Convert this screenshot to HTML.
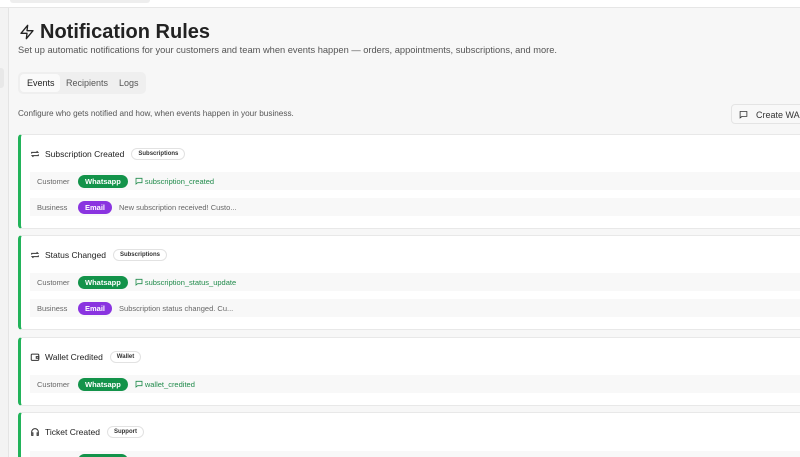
<!DOCTYPE html>
<html><head><style>
*{box-sizing:border-box;margin:0;padding:0}
html,body{width:800px;height:457px;overflow:hidden}
body{background:#f7f7f7;font-family:"Liberation Sans",sans-serif;position:relative;color:#222}
.top{position:absolute;left:0;top:0;width:800px;height:8px;background:#fff;border-bottom:1px solid #e6e6e6}
.topbar{position:absolute;left:10px;top:0;width:140px;height:3px;background:#eee;border-radius:0 0 4px 4px}
.side{position:absolute;left:0;top:8px;width:9px;height:449px;background:#f3f3f3;border-right:1px solid #e4e4e4}
.side i{position:absolute;left:0;top:60px;width:4px;height:20px;background:#e8e8e8;border-radius:0 3px 3px 0}
h1{position:absolute;left:40px;top:21px;font-size:20px;font-weight:bold;color:#222}
.bolt{position:absolute;left:19px;top:23px}
.sub{position:absolute;left:18px;top:45px;font-size:9.3px;color:#555}
.tabs{position:absolute;left:18px;top:72px;width:128px;height:22px;background:#efefef;border-radius:5px}
.tabs span{position:absolute;top:6px;font-size:9px;color:#555}
.tabs .on{left:2px;top:2px;width:40px;height:18px;background:#fafafa;border-radius:4px;color:#222;padding:4px 0 0 7px}
.desc{position:absolute;left:18px;top:109px;font-size:8.2px;color:#555}
.btn{position:absolute;left:731px;top:104px;width:80px;height:20px;border:1px solid #e4e4e4;border-radius:4px;background:#f8f8f8;font-size:9px;color:#333;padding:5px 0 0 24px}
.card{position:absolute;left:18px;width:800px;background:#fff;border:1px solid #e8e8e8;border-left:3px solid #22b35a;border-radius:4px;overflow:hidden}
.t{position:absolute;left:9px;font-size:8.5px;color:#222;display:flex;align-items:center;gap:5px}
.t svg{width:10px;height:10px}
.tag{font-size:6px;font-weight:bold;color:#333;border:1px solid #e2e2e2;border-radius:8px;padding:2px 6px;margin-left:2px}
.row{position:absolute;left:9px;width:780px;height:18px;background:#f8f8f8;font-size:7.5px;color:#666;display:flex;align-items:center}
.row .w{width:48px;padding-left:7px}
.pill{color:#fff;font-weight:bold;font-size:7.5px;border-radius:8px;padding:2px 7px;margin-right:7px}
.g{background:#13934a}.p{background:#8a34e0}
.lk{color:#1f8a4a;display:flex;align-items:center;gap:2px}
.lk svg{width:8px;height:8px}
</style></head><body>
<div class="top"><div class="topbar"></div></div>
<div class="side"><i></i></div>
<svg class="bolt" width="16" height="18" viewBox="0 0 24 24" fill="none" stroke="#222" stroke-width="2" stroke-linejoin="round"><path d="M13 2L3 14h9l-1 8 10-12h-9l1-8z"/></svg>
<h1>Notification Rules</h1>
<div class="sub">Set up automatic notifications for your customers and team when events happen — orders, appointments, subscriptions, and more.</div>
<div class="tabs"><span class="on">Events</span><span style="left:48px">Recipients</span><span style="left:101px">Logs</span></div>
<div class="desc">Configure who gets notified and how, when events happen in your business.</div>
<div class="btn"><svg style="position:absolute;left:7px;top:5px" width="9" height="9" viewBox="0 0 24 24" fill="none" stroke="#333" stroke-width="2.2"><path d="M3 4h18v13H8l-5 4z"/></svg>Create WA T</div>

<div class="card" style="top:134px;height:95px">
 <div class="t" style="top:13px"><svg viewBox="0 0 24 24" fill="none" stroke="#333" stroke-width="2.4"><path d="M4 11V8h15l-3-3M20 13v3H5l3 3"/></svg>Subscription Created<span class="tag">Subscriptions</span></div>
 <div class="row" style="top:37px"><span class="w">Customer</span><span class="pill g">Whatsapp</span><span class="lk"><svg viewBox="0 0 24 24" fill="none" stroke="#1f8a4a" stroke-width="2.4"><path d="M3 4h18v13H8l-5 4z"/></svg>subscription_created</span></div>
 <div class="row" style="top:63px"><span class="w">Business</span><span class="pill p">Email</span><span>New subscription received! Custo...</span></div>
</div>
<div class="card" style="top:235px;height:95px">
 <div class="t" style="top:13px"><svg viewBox="0 0 24 24" fill="none" stroke="#333" stroke-width="2.4"><path d="M4 11V8h15l-3-3M20 13v3H5l3 3"/></svg>Status Changed<span class="tag">Subscriptions</span></div>
 <div class="row" style="top:37px"><span class="w">Customer</span><span class="pill g">Whatsapp</span><span class="lk"><svg viewBox="0 0 24 24" fill="none" stroke="#1f8a4a" stroke-width="2.4"><path d="M3 4h18v13H8l-5 4z"/></svg>subscription_status_update</span></div>
 <div class="row" style="top:63px"><span class="w">Business</span><span class="pill p">Email</span><span>Subscription status changed. Cu...</span></div>
</div>
<div class="card" style="top:337px;height:69px">
 <div class="t" style="top:13px"><svg viewBox="0 0 24 24" fill="none" stroke="#333" stroke-width="2.4"><rect x="3" y="5" width="18" height="15" rx="2"/><path d="M15 11h6v4h-6z"/></svg>Wallet Credited<span class="tag">Wallet</span></div>
 <div class="row" style="top:37px"><span class="w">Customer</span><span class="pill g">Whatsapp</span><span class="lk"><svg viewBox="0 0 24 24" fill="none" stroke="#1f8a4a" stroke-width="2.4"><path d="M3 4h18v13H8l-5 4z"/></svg>wallet_credited</span></div>
</div>
<div class="card" style="top:412px;height:60px">
 <div class="t" style="top:13px"><svg viewBox="0 0 24 24" fill="none" stroke="#333" stroke-width="2.4"><path d="M4 16v-4a8 8 0 0116 0v4M4 14h3v6H4zM17 14h3v6h-3z"/></svg>Ticket Created<span class="tag">Support</span></div>
 <div class="row" style="top:38px"><span class="w">Customer</span><span class="pill g">Whatsapp</span></div>
</div>
</body></html>
